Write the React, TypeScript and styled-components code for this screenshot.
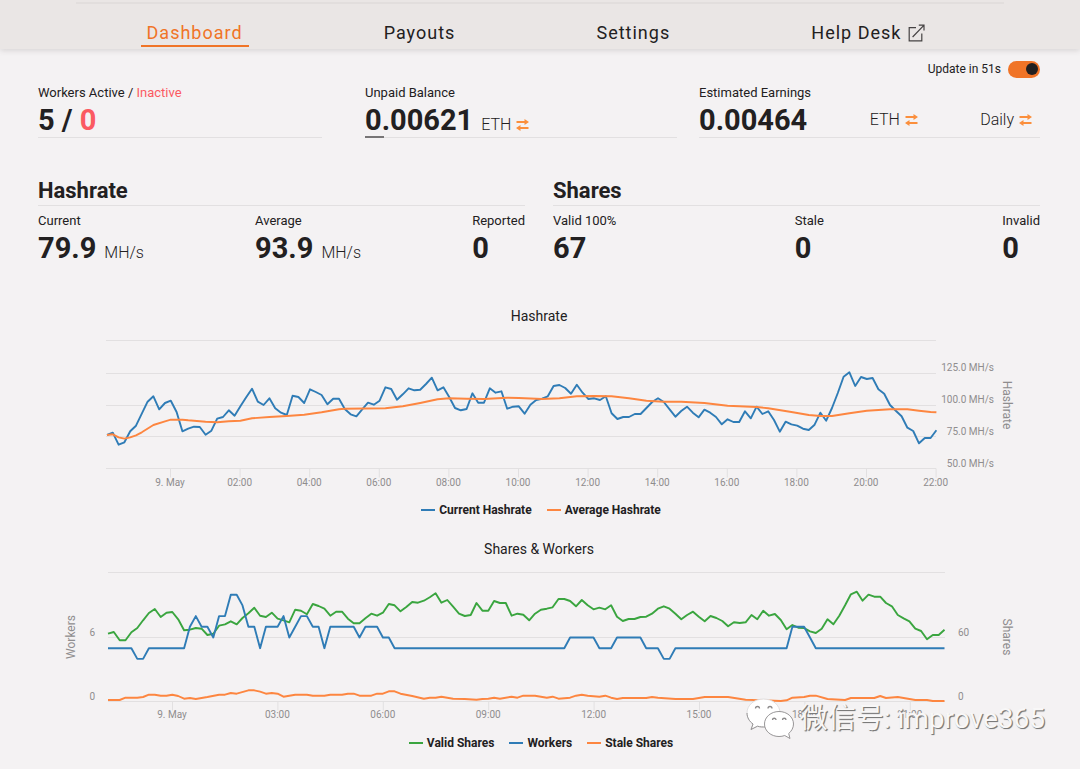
import React from "react";
import styled, { createGlobalStyle } from "styled-components";

const ink = "#222021";
const orange = "#f07427";
const amber = "#fb8f3c";
const red = "#fb5a62";
const rule = "#e2e0e1";
const axis = "#8f8d8e";

const GlobalStyle = createGlobalStyle`
  * { box-sizing: border-box; }
  body {
    margin: 0;
    background: #f4f2f3;
    color: ${ink};
    font-family: Roboto, "Liberation Sans", "Noto Sans CJK SC", sans-serif;
  }
`;

const Page = styled.div`
  position: relative;
  padding-bottom: 12px;
`;

const Header = styled.header`
  padding: 2px 76px 0;
  background: #eae6e5;
  box-shadow: 0 1px 6px rgba(60, 50, 50, 0.18);
`;

const Nav = styled.nav`
  display: flex;
  justify-content: space-around;
  border-top: 2px solid #e2dedd;
  padding: 16px 8px 2px 0;
`;

const NavLink = styled.a<{ $active?: boolean }>`
  display: flex;
  align-items: center;
  gap: 7px;
  height: 27px;
  padding: 0 6px;
  border-bottom: 2px solid ${(p) => (p.$active ? orange : "transparent")};
  color: ${(p) => (p.$active ? orange : ink)};
  font-size: 18px;
  letter-spacing: 1px;
  text-decoration: none;
`;

const Main = styled.main`
  padding: 11px 40px 0 38px;
`;

const UpdateLabel = styled.label`
  display: flex;
  align-items: center;
  justify-content: flex-end;
  gap: 7px;
  height: 18px;
  font-size: 12px;
`;

const Toggle = styled.input`
  appearance: none;
  display: flex;
  align-items: center;
  justify-content: flex-end;
  width: 32px;
  height: 17px;
  margin: 0;
  padding: 2px;
  border-radius: 9px;
  background: ${orange};
  &::before {
    content: "";
    width: 12px;
    height: 12px;
    border-radius: 50%;
    background: ${ink};
  }
  &:not(:checked) {
    justify-content: flex-start;
    background: #bbb;
  }
`;

const Summary = styled.section`
  display: grid;
  grid-template-columns: 327fr 334fr 341fr;
  padding-top: 6px;
`;

const SummaryCell = styled.div<{ $gap: number }>`
  padding-right: ${(p) => p.$gap}px;
`;

const Label = styled.div`
  height: 17px;
  line-height: 17px;
  font-size: 13px;
`;

const ValueRow = styled.div`
  display: flex;
  align-items: baseline;
  gap: 8px;
  height: 35px;
  line-height: 38px;
`;

const Value = styled.strong`
  font-size: 29px;
  font-weight: 700;
`;

const Unit = styled.span`
  font-size: 16px;
  font-weight: 300;
`;

const Danger = styled.span`
  color: ${red};
`;

const Swap = styled.button`
  display: flex;
  align-items: center;
  gap: 5px;
  padding: 0;
  border: 0;
  background: none;
  color: inherit;
  font: 300 16px/20px Roboto, sans-serif;
  cursor: pointer;
`;

const EarningsRow = styled.div`
  display: flex;
  align-items: center;
  justify-content: space-between;
  height: 35px;
  padding: 3px 8px 0 0;
  line-height: 38px;
`;

const Track = styled.div`
  height: 2px;
  border-bottom: 1px solid ${rule};
`;

const Fill = styled.div`
  height: 2px;
  background: #777576;
`;

const Panels = styled.section`
  display: grid;
  grid-template-columns: 1fr 1fr;
  gap: 28px;
  padding-top: 40px;
`;

const PanelTitle = styled.h2`
  margin: 0 0 6px;
  height: 28px;
  border-bottom: 1px solid ${rule};
  font-size: 22px;
  line-height: 26px;
`;

const Stats = styled.div`
  display: flex;
  justify-content: space-between;
`;

const ChartSection = styled.section<{ $top: number }>`
  padding-top: ${(p) => p.$top}px;
`;

const ChartTitle = styled.h3`
  margin: 0 0 4px;
  font-size: 14px;
  font-weight: 400;
  line-height: 20px;
  text-align: center;
`;

const Plot = styled.svg`
  display: block;
  width: 100%;
  height: auto;
  fill: none;
  text {
    fill: ${axis};
    font-size: 10px;
  }
`;

const AxisTitle = styled.text`
  && { font-size: 12px; }
`;

const Legend = styled.ul`
  display: flex;
  justify-content: center;
  gap: 15px;
  margin: 8px 0 0;
  padding: 0 0 0 4px;
  list-style: none;
`;

const LegendItem = styled.li<{ $color: string }>`
  display: flex;
  align-items: center;
  gap: 4px;
  font-size: 12px;
  font-weight: 700;
  line-height: 20px;
  &::before {
    content: "";
    width: 14px;
    height: 2px;
    background: ${(p) => p.$color};
  }
`;

const Watermark = styled.div`
  position: absolute;
  right: 35px;
  bottom: 25px;
  display: flex;
  align-items: center;
  gap: 6px;
  color: #f8f7f7;
  font: 400 28px/40px Roboto, "Noto Sans CJK SC", sans-serif;
  text-shadow: 1px 1px 1px #777, 1px 1px 0 #999;
  pointer-events: none;
`;

const SwapIcon = () => (
  <svg width="13" height="14" viewBox="0 0 13 14" fill="none" stroke={amber} strokeWidth="1.9">
    <path d="M0.5 4H10M12.5 10H3" />
    <path d="M8.500 1L13 4L8.500 7ZM4.500 7L0 10L4.500 13Z" fill={amber} stroke="none" />
  </svg>
);

const ExternalIcon = () => (
  <svg width="17" height="18" viewBox="0 0 17 18" fill="none" stroke="#454243" strokeWidth="1.2">
    <path d="M8 3.6H1.2V16.8H13.8V9.4M4.6 13L15.6 1.6M10.8 1.2H16V6.6" />
  </svg>
);

const WeChatIcon = () => (
  <svg width="48" height="42" viewBox="0 0 48 42" fill="#fff" stroke="#8c8a8b" strokeWidth="0.9">
    <path d="M17.500 1C8 1 1 7.200 1 15C1 19.500 3.300 23.300 7 26L5 31.500L11.500 28.200C14 29 17 29.200 19.500 28.800C28 28 34 22 34 15C34 7.200 27 1 17.500 1Z" stroke="#dddbdc" />
    <path d="M1 15C1 19.500 3.300 23.300 7 26L5 31.500L11.500 28.200C14 29 17 29.200 19.500 28.800" fill="none" />
    <path d="M33 13.500C25 13.500 18.500 19 18.500 26C18.500 33 25 38.500 33 38.500C35 38.500 37 38.200 38.700 37.500L44 40.500L42.700 35.500C45.500 33.200 47.500 29.800 47.500 26C47.500 19 41 13.500 33 13.500Z" />
    <path d="M9.500 10.500A2 2 0 0 1 13.500 10.500M22 10.500A2 2 0 0 1 26 10.500M26.500 22A1.700 1.700 0 0 1 30 22M36.500 22A1.700 1.700 0 0 1 40 22" fill="none" strokeWidth="1.300" />
  </svg>
);

type Point = [number, number];

/* Ten-minute samples, measured down from the drawing's origin in thirds of a unit. */
const currentHashrate = [
  315, 308, 344, 337, 304, 287, 251, 215, 199, 238, 219, 212, 246, 304, 296, 290, 291, 314,
  302, 266, 261, 241, 257, 229, 202, 176, 215, 225, 205, 235, 248, 255, 197, 201, 219, 178,
  186, 195, 223, 206, 206, 237, 253, 259, 238, 218, 224, 212, 172, 177, 209, 193, 175, 181,
  179, 162, 143, 181, 172, 201, 234, 241, 237, 190, 218, 218, 175, 188, 184, 236, 230, 229,
  251, 224, 210, 206, 199, 168, 165, 174, 191, 164, 188, 207, 205, 210, 199, 250, 267, 261,
  261, 252, 252, 234, 216, 205, 216, 238, 260, 243, 230, 248, 262, 239, 248, 261, 283, 268,
  276, 276, 244, 265, 230, 252, 244, 270, 305, 275, 283, 287, 296, 300, 284, 248, 272, 234,
  189, 140, 127, 168, 141, 147, 144, 178, 191, 225, 242, 259, 293, 303, 340, 324, 324, 301,
];

const averageHashrate: Point[] = [
  [0, 315], [1, 313], [2, 322], [3, 326], [4, 322], [5, 316], [6, 307], [8, 285], [10, 274],
  [11, 269], [13, 269], [14, 271], [17, 275], [19, 277], [21, 274], [23, 272], [25, 265],
  [28, 261], [31, 258], [34, 254], [37, 247], [40, 238], [41, 236], [48, 235], [51, 229],
  [54, 219], [57, 208], [59, 205], [62, 206], [65, 207], [69, 203], [71, 204], [75, 207],
  [78, 205], [81, 199], [84, 198], [87, 199], [90, 205], [93, 212], [96, 215], [99, 215],
  [103, 219], [107, 227], [112, 231], [114, 235], [118, 246], [121, 255], [123, 258],
  [125, 258], [128, 250], [131, 242], [135, 238], [138, 238], [140, 242], [142, 246], [143, 247],
];

const validShares = [
  221, 216, 241, 241, 217, 204, 181, 159, 147, 171, 158, 156, 178, 211, 209, 204, 206, 225,
  221, 197, 193, 184, 193, 174, 160, 143, 167, 171, 158, 176, 181, 187, 149, 152, 163, 132,
  138, 146, 167, 155, 155, 176, 190, 190, 175, 161, 167, 158, 132, 136, 154, 141, 126, 128,
  122, 112, 100, 128, 120, 140, 161, 168, 165, 129, 152, 152, 123, 129, 129, 167, 161, 164,
  181, 161, 149, 146, 142, 117, 117, 123, 139, 120, 136, 148, 143, 148, 136, 170, 183, 177,
  177, 171, 170, 161, 146, 139, 146, 161, 178, 165, 155, 170, 184, 168, 174, 183, 199, 187,
  189, 187, 165, 178, 152, 167, 162, 180, 208, 195, 203, 204, 214, 219, 206, 178, 193, 167,
  136, 103, 95, 122, 104, 110, 110, 129, 139, 165, 175, 184, 206, 213, 238, 225, 225, 209,
];

const staleShares: Point[] = [
  [0, 420], [2, 420], [3, 413], [5, 413], [6, 411], [7, 404], [8, 404], [9, 407], [10, 407],
  [11, 404], [12, 408], [13, 416], [14, 414], [15, 417], [17, 411], [19, 404], [20, 404],
  [21, 399], [22, 401], [24, 391], [25, 391], [26, 395], [27, 401], [28, 399], [29, 401],
  [30, 410], [31, 407], [32, 404], [34, 404], [35, 407], [37, 407], [38, 404], [40, 404],
  [41, 401], [42, 401], [43, 407], [45, 407], [46, 401], [47, 401], [48, 394], [49, 394],
  [50, 401], [52, 408], [54, 416], [55, 413], [56, 413], [57, 410], [59, 416], [61, 417],
  [63, 419], [64, 417], [65, 416], [66, 413], [67, 416], [69, 410], [70, 413], [71, 407],
  [73, 407], [75, 413], [76, 410], [77, 416], [79, 413], [80, 407], [81, 404], [82, 407],
  [84, 410], [85, 407], [86, 413], [87, 417], [88, 414], [92, 414], [93, 411], [94, 413],
  [97, 417], [100, 417], [102, 411], [106, 411], [109, 419], [115, 423], [116, 421],
  [117, 413], [119, 411], [120, 407], [121, 407], [123, 417], [126, 420], [127, 414],
  [131, 414], [132, 408], [133, 414], [135, 411], [138, 420], [140, 420], [141, 423], [143, 423],
];

/* Worker count at the samples where it changes. */
const workerCounts: Point[] = [
  [0, 5], [4, 5], [5, 4], [6, 4], [7, 5], [13, 5], [14, 7], [15, 8], [16, 7], [17, 7], [18, 6],
  [19, 8], [20, 8], [21, 10], [22, 10], [23, 9], [24, 7], [25, 7], [26, 5], [27, 7], [29, 7],
  [30, 8], [31, 6], [32, 7], [33, 8], [34, 8], [35, 7], [36, 7], [37, 5], [38, 7], [42, 7],
  [43, 6], [44, 7], [46, 7], [47, 6], [48, 6], [49, 5], [78, 5], [79, 6], [83, 6], [84, 5],
  [86, 5], [87, 6], [91, 6], [92, 5], [94, 5], [95, 4], [96, 4], [97, 5], [116, 5], [117, 7],
  [119, 7], [120, 6], [121, 5], [143, 5],
];

const indexed = (ys: number[]): Point[] => ys.map((y, i) => [i, y]);
const workers: Point[] = workerCounts.map(([i, n]) => [i, 425 - n * 32.1]);

const line = (points: Point[], left: number, step: number) =>
  points.map(([i, y]) => `${(left + i * step).toFixed(1)},${(y / 3).toFixed(1)}`).join(" ");

const Series = ({ points, left, step, color }: { points: Point[]; left: number; step: number; color: string }) => (
  <polyline points={line(points, left, step)} stroke={color} strokeWidth="1.9" strokeLinejoin="round" />
);

const blue = "#2f7cb6";
const green = "#3aa53f";
const tangerine = "#fd8640";

const HashrateChart = () => {
  const times = ["9. May", "02:00", "04:00", "06:00", "08:00", "10:00", "12:00", "14:00", "16:00", "18:00", "20:00", "22:00"];
  const scale = ["125.0 MH/s", "100.0 MH/s", "75.0 MH/s", "50.0 MH/s"];
  return (
    <Plot viewBox="0 0 1002 162" role="img" aria-label="Hashrate over the last day">
      <g stroke={rule}>
        {[10.5, 43.5, 75.5, 106.5, 138.5].map((y) => <path key={y} d={`M68 ${y}H898`} />)}
        {times.map((t, i) => <path key={t} d={`M${132.5 + i * 69.6} 138.5v9`} />)}
      </g>
      <Series points={indexed(currentHashrate)} left={69} step={5.8} color={blue} />
      <Series points={averageHashrate} left={69} step={5.8} color={tangerine} />
      {times.map((t, i) => (
        <text key={t} x={132 + i * 69.6} y={156} textAnchor="middle">{t}</text>
      ))}
      {scale.map((t, i) => (
        <text key={t} x={956} y={41 + i * 32} textAnchor="end">{t}</text>
      ))}
      <AxisTitle textAnchor="middle" transform="translate(965 75) rotate(90)">Hashrate</AxisTitle>
    </Plot>
  );
};

const SharesChart = () => {
  const times = ["9. May", "03:00", "06:00", "09:00", "12:00", "15:00", "18:00", "21:00"];
  return (
    <Plot viewBox="0 3 1002 162" role="img" aria-label="Shares and workers over the last day">
      <g stroke={rule}>
        {[12.5, 77.5, 141.5].map((y) => <path key={y} d={`M70 ${y}H907`} />)}
        {times.map((t, i) => <path key={t} d={`M${134.5 + i * 105.4} 141.5v9`} />)}
      </g>
      <Series points={indexed(validShares)} left={70} step={5.85} color={green} />
      <Series points={workers} left={70} step={5.85} color={blue} />
      <Series points={staleShares} left={70} step={5.85} color={tangerine} />
      {times.map((t, i) => (
        <text key={t} x={134 + i * 105.4} y={158} textAnchor="middle">{t}</text>
      ))}
      <text x={57} y={76} textAnchor="end">6</text>
      <text x={57} y={140} textAnchor="end">0</text>
      <text x={920} y={76}>60</text>
      <text x={920} y={140}>0</text>
      <AxisTitle textAnchor="middle" transform="translate(37 77) rotate(-90)">Workers</AxisTitle>
      <AxisTitle textAnchor="middle" transform="translate(965 77) rotate(90)">Shares</AxisTitle>
    </Plot>
  );
};

const Stat = ({ label, value, unit }: { label: string; value: string; unit?: string }) => (
  <div>
    <Label>{label}</Label>
    <ValueRow>
      <Value>{value}</Value>
      {unit && <Unit>{unit}</Unit>}
    </ValueRow>
  </div>
);

export default function App() {
  return (
    <Page>
      <GlobalStyle />
      <Header>
        <Nav>
          <NavLink href="#dashboard" $active>Dashboard</NavLink>
          <NavLink href="#payouts">Payouts</NavLink>
          <NavLink href="#settings">Settings</NavLink>
          <NavLink href="#help">Help Desk<ExternalIcon /></NavLink>
        </Nav>
      </Header>
      <Main>
        <UpdateLabel>
          Update in 51s
          <Toggle type="checkbox" defaultChecked />
        </UpdateLabel>
        <Summary>
          <SummaryCell $gap={43}>
            <Label>Workers Active / <Danger>Inactive</Danger></Label>
            <ValueRow><Value>5 / <Danger>0</Danger></Value></ValueRow>
            <Track />
          </SummaryCell>
          <SummaryCell $gap={22}>
            <Label>Unpaid Balance</Label>
            <ValueRow>
              <Value>0.00621</Value>
              <Swap>ETH<SwapIcon /></Swap>
            </ValueRow>
            <Track><Fill style={{ width: "6%" }} /></Track>
          </SummaryCell>
          <SummaryCell $gap={0}>
            <Label>Estimated Earnings</Label>
            <EarningsRow>
              <Value>0.00464</Value>
              <Swap>ETH<SwapIcon /></Swap>
              <Swap>Daily<SwapIcon /></Swap>
            </EarningsRow>
            <Track />
          </SummaryCell>
        </Summary>
        <Panels>
          <div>
            <PanelTitle>Hashrate</PanelTitle>
            <Stats>
              <Stat label="Current" value="79.9" unit="MH/s" />
              <Stat label="Average" value="93.9" unit="MH/s" />
              <Stat label="Reported" value="0" />
            </Stats>
          </div>
          <div>
            <PanelTitle>Shares</PanelTitle>
            <Stats>
              <Stat label="Valid 100%" value="67" />
              <Stat label="Stale" value="0" />
              <Stat label="Invalid" value="0" />
            </Stats>
          </div>
        </Panels>
        <ChartSection $top={42}>
          <ChartTitle>Hashrate</ChartTitle>
          <HashrateChart />
          <Legend>
            <LegendItem $color={blue}>Current Hashrate</LegendItem>
            <LegendItem $color={tangerine}>Average Hashrate</LegendItem>
          </Legend>
        </ChartSection>
        <ChartSection $top={19}>
          <ChartTitle>Shares &amp; Workers</ChartTitle>
          <SharesChart />
          <Legend>
            <LegendItem $color={green}>Valid Shares</LegendItem>
            <LegendItem $color={blue}>Workers</LegendItem>
            <LegendItem $color={tangerine}>Stale Shares</LegendItem>
          </Legend>
        </ChartSection>
      </Main>
      <Watermark>
        <WeChatIcon />
        微信号: improve365
      </Watermark>
    </Page>
  );
}
